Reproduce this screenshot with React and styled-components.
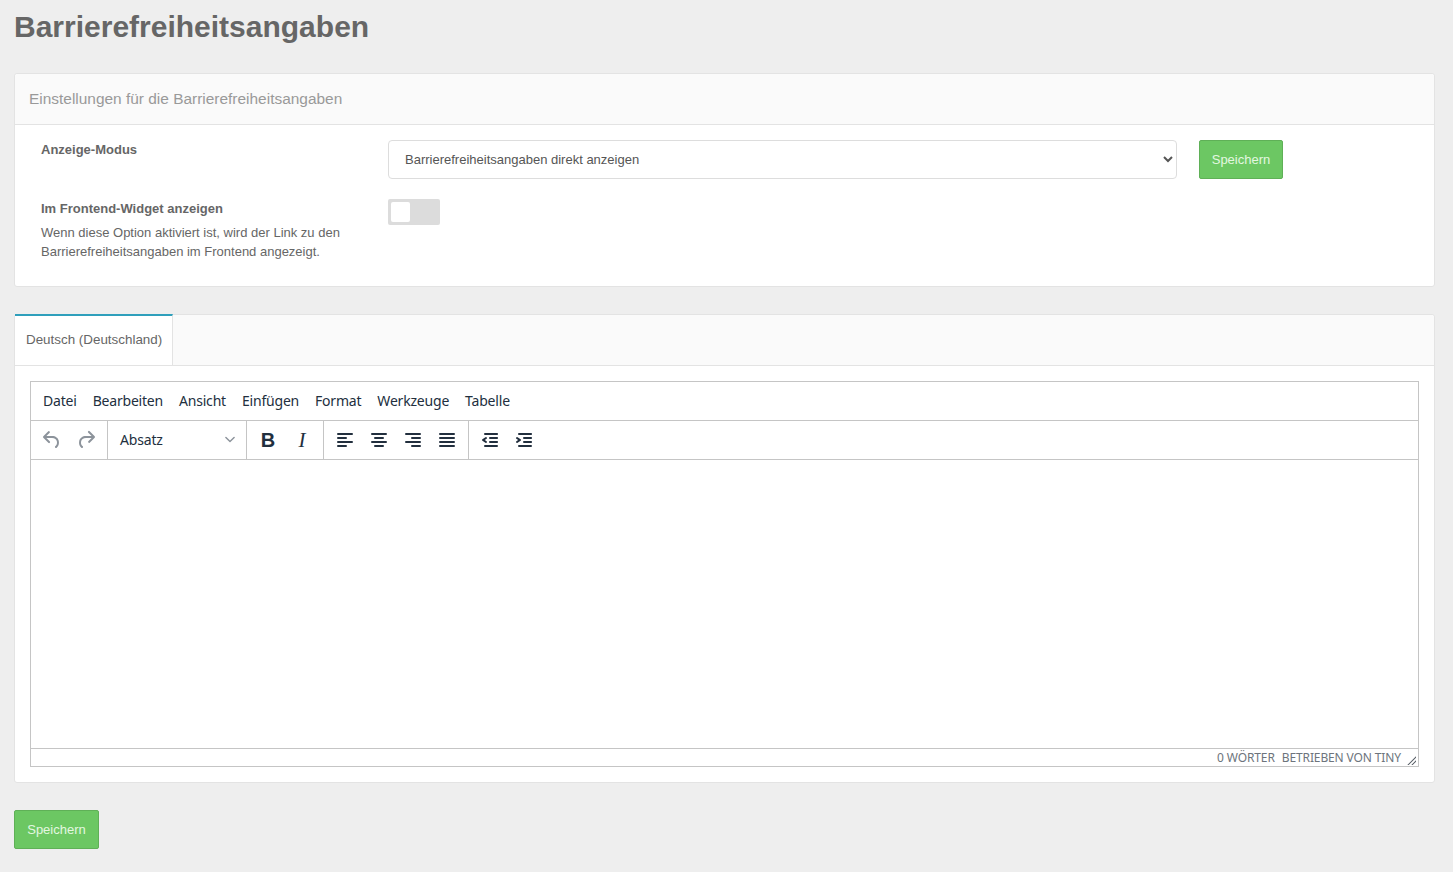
import React from 'react';
import styled, { createGlobalStyle } from 'styled-components';

const GlobalStyle = createGlobalStyle`
  html, body {
    margin: 0;
    padding: 0;
    background: #eeeeee;
    font-family: "Liberation Sans", Arial, sans-serif;
    color: #666666;
  }
  * { box-sizing: border-box; }
`

const Page = styled.div`
  padding: 0 18px 23px 14px;
`
const PageTitle = styled.h1`
  margin: 0;
  height: 73px;
  padding-top: 10px;
  font-size: 30px;
  line-height: 34px;
  font-weight: 700;
  color: #666666;
`
const Panel = styled.section`
  background: #fff;
  border: 1px solid #e3e3e3;
  border-radius: 3px;
  margin-bottom: ${(p) => p.$gap}px;
`
const PanelHeader = styled.header`
  height: 51px;
  padding: 0 14px;
  display: flex;
  align-items: center;
  background: #fafafa;
  border-bottom: 1px solid #e3e3e3;
  font-size: 15.45px;
  color: #999999;
  border-radius: 3px 3px 0 0;
`
const SettingsBody = styled.div`
  padding: 15px 26px 25px;
  display: grid;
  grid-template-columns: 347px 789px auto;
  grid-template-rows: 39px auto;
  row-gap: 20px;
  align-items: start;
`
const FieldLabel = styled.div`
  font-size: 13px;
  line-height: 20px;
  font-weight: 700;
  color: #666666;
`
const ModeLabel = styled(FieldLabel)`
  line-height: 19px;
`
const Hint = styled.p`
  margin: 4px 0 0;
  font-size: 13px;
  line-height: 19px;
  color: #666666;
  max-width: 320px;
`
const ModeSelect = styled.select`
  width: 789px;
  height: 39px;
  padding: 0 12px;
  background: #fff;
  border: 1px solid #dddddd;
  border-radius: 4px;
  font-family: inherit;
  font-size: 13px;
  color: #555555;
`
const SaveButton = styled.button`
  width: ${(p) => p.$width}px;
  height: 39px;
  padding: 0;
  background: #6cc763;
  border: 1px solid #5fb057;
  border-radius: 2px;
  font-family: inherit;
  font-size: 13px;
  color: #e3f7e0;
`
const RowSave = styled(SaveButton)`
  margin-left: 22px;
`
const Toggle = styled.div`
  width: 52px;
  height: 26px;
  padding: 3px;
  background: #dcdcdc;
  border-radius: 2px;
`
const ToggleKnob = styled.div`
  width: 19px;
  height: 20px;
  background: #fff;
  border-radius: 2px;
`
const TabBar = styled.div`
  height: 51px;
  display: flex;
  background: #fafafa;
  border-bottom: 1px solid #e3e3e3;
  border-radius: 3px 3px 0 0;
`
const Tab = styled.div`
  width: 158px;
  height: 51px;
  margin-top: -1px;
  padding: 0 0 2px 11px;
  display: flex;
  align-items: center;
  background: #fff;
  border-top: 2px solid #2f9fbb;
  border-right: 1px solid #e3e3e3;
  font-size: 13.4px;
  color: #666666;
`
const TabBody = styled.div`
  padding: 15px 15px 15px;
`
const Editor = styled.div`
  height: 386px;
  display: flex;
  flex-direction: column;
  border: 1px solid #c5c5c5;
  background: #fff;
  font-family: "Noto Sans", "Open Sans", sans-serif;
  color: #222f3e;
`
const MenuBar = styled.div`
  height: 39px;
  flex: none;
  padding: 0 4px 2px;
  display: flex;
  align-items: center;
  border-bottom: 1px solid #c5c5c5;
`
const MenuItem = styled.span`
  padding: 0 8px;
  font-size: 14px;
  letter-spacing: -0.2px;
  white-space: nowrap;
`
const ToolBar = styled.div`
  height: 39px;
  flex: none;
  display: flex;
  border-bottom: 1px solid #c5c5c5;
`
const ToolGroup = styled.div`
  display: flex;
  align-items: center;
  padding: 0 4px;
  border-right: ${(p) => (p.$last ? 'none' : '1px solid #c5c5c5')};
`
const ToolIcon = styled.span`
  width: 34px;
  height: 34px;
  display: flex;
  align-items: center;
  justify-content: center;
  color: ${(p) => (p.$disabled ? '#8c939b' : '#222f3e')};
  svg { fill: currentColor; display: block; }
`
const BoldGlyph = styled(ToolIcon)`
  font-family: "Liberation Sans", Arial, sans-serif;
  font-weight: 700;
  font-size: 20px;
`
const ItalicGlyph = styled(ToolIcon)`
  font-family: "Liberation Serif", serif;
  font-style: italic;
  font-size: 21px;
`
const FormatSelect = styled.div`
  width: 134px;
  height: 100%;
  margin-left: -4px;
  padding: 0 7px 2px 12px;
  display: flex;
  align-items: center;
  justify-content: space-between;
  font-size: 14px;
  letter-spacing: -0.18px;
  svg { color: #8c939b; fill: currentColor; display: block; margin-top: 2px; }
`
const EditArea = styled.div`
  flex: 1;
`
const StatusBar = styled.div`
  height: 18px;
  flex: none;
  padding: 0 17px 0 0;
  display: flex;
  align-items: center;
  justify-content: flex-end;
  gap: 7px;
  border-top: 1px solid #c5c5c5;
  font-size: 12px;
  letter-spacing: -0.12px;
  color: #6d747c;
  white-space: nowrap;
  position: relative;
`
const ResizeHandle = styled.svg`
  position: absolute;
  right: 1px;
  bottom: 0;
  fill: #555c64;
`

const rows = {
  left: [[4, 16], [4, 10], [4, 16], [4, 10]],
  center: [[4, 16], [7, 10], [4, 16], [7, 10]],
  right: [[4, 16], [10, 10], [4, 16], [10, 10]],
  justify: [[4, 16], [4, 16], [4, 16], [4, 16]],
}

const AlignIcon = ({ type }) => (
  <ToolIcon>
    <svg width="24" height="24" viewBox="0 0 24 24">
      {rows[type].map(([x, w], i) => (
        <rect key={i} x={x} y={5 + i * 4} width={w} height="2" rx="1" />
      ))}
    </svg>
  </ToolIcon>
)

const PathIcon = ({ d, disabled }) => (
  <ToolIcon $disabled={disabled}>
    <svg width="24" height="24" viewBox="0 0 24 24"><path d={d} /></svg>
  </ToolIcon>
)

const undoPath = 'M6.4 8H12c3.7 0 6.2 2 6.8 5.1.6 2.7-.4 5.6-2.3 6.8a1 1 0 0 1-1-1.8c1.1-.7 1.8-2.7 1.4-4.6-.5-2.1-2.1-3.5-4.9-3.5H6.4l3.3 3.3a1 1 0 1 1-1.4 1.4l-5-5a1 1 0 0 1 0-1.4l5-5a1 1 0 0 1 1.4 1.4L6.4 8Z'
const redoPath = 'M17.6 10H12c-2.8 0-4.4 1.4-4.9 3.5-.4 2 .3 3.9 1.4 4.6a1 1 0 1 1-1 1.8c-2-1.2-2.9-4.1-2.3-6.8.6-3 3.2-5.1 6.8-5.1h5.6l-3.3-3.3a1 1 0 1 1 1.4-1.4l5 5a1 1 0 0 1 0 1.4l-5 5a1 1 0 0 1-1.4-1.4l3.3-3.3Z'
const outdentPath = 'M7 5h12c.6 0 1 .4 1 1s-.4 1-1 1H7a1 1 0 1 1 0-2Zm5 4h7c.6 0 1 .4 1 1s-.4 1-1 1h-7a1 1 0 0 1 0-2Zm0 4h7c.6 0 1 .4 1 1s-.4 1-1 1h-7a1 1 0 0 1 0-2Zm-5 4h12a1 1 0 0 1 0 2H7a1 1 0 0 1 0-2Zm1.6-3.8a1 1 0 0 1-1.2 1.6l-3-2a1 1 0 0 1 0-1.6l3-2a1 1 0 0 1 1.2 1.6L6.8 12l1.8 1.2Z'
const indentPath = 'M7 5h12c.6 0 1 .4 1 1s-.4 1-1 1H7a1 1 0 1 1 0-2Zm5 4h7c.6 0 1 .4 1 1s-.4 1-1 1h-7a1 1 0 0 1 0-2Zm0 4h7c.6 0 1 .4 1 1s-.4 1-1 1h-7a1 1 0 0 1 0-2Zm-5 4h12a1 1 0 0 1 0 2H7a1 1 0 0 1 0-2Zm-2.6-3.8L6.2 12l-1.8-1.2a1 1 0 0 1 1.2-1.6l3 2a1 1 0 0 1 0 1.6l-3 2a1 1 0 1 1-1.2-1.6Z'

const menus = ['Datei', 'Bearbeiten', 'Ansicht', 'Einfügen', 'Format', 'Werkzeuge', 'Tabelle']

const App = () => {
  return (
    <Page>
      <GlobalStyle />
      <PageTitle>Barrierefreiheitsangaben</PageTitle>

      <Panel $gap={27}>
        <PanelHeader>Einstellungen für die Barrierefreiheitsangaben</PanelHeader>
        <SettingsBody>
          <ModeLabel>Anzeige-Modus</ModeLabel>
          <ModeSelect defaultValue="direct">
            <option value="direct">Barrierefreiheitsangaben direkt anzeigen</option>
          </ModeSelect>
          <RowSave $width={84}>Speichern</RowSave>
          <div>
            <FieldLabel>Im Frontend-Widget anzeigen</FieldLabel>
            <Hint>Wenn diese Option aktiviert ist, wird der Link zu den Barrierefreiheitsangaben im Frontend angezeigt.</Hint>
          </div>
          <Toggle><ToggleKnob /></Toggle>
        </SettingsBody>
      </Panel>

      <Panel $gap={27}>
        <TabBar>
          <Tab>Deutsch (Deutschland)</Tab>
        </TabBar>
        <TabBody>
          <Editor>
            <MenuBar>
              {menus.map((m) => <MenuItem key={m}>{m}</MenuItem>)}
            </MenuBar>
            <ToolBar>
              <ToolGroup>
                <PathIcon d={undoPath} disabled />
                <PathIcon d={redoPath} disabled />
              </ToolGroup>
              <ToolGroup>
                <FormatSelect>
                  Absatz
                  <svg width="10" height="10" viewBox="0 0 10 10">
                    <path d="M5 7.2a.7.7 0 0 1-.5-.2L.4 3a.7.7 0 1 1 1-1L5 5.500 8.600 2a.7.7 0 1 1 1 1L5.500 7a.7.7 0 0 1-.5.2Z" />
                  </svg>
                </FormatSelect>
              </ToolGroup>
              <ToolGroup>
                <BoldGlyph>B</BoldGlyph>
                <ItalicGlyph>I</ItalicGlyph>
              </ToolGroup>
              <ToolGroup>
                <AlignIcon type="left" />
                <AlignIcon type="center" />
                <AlignIcon type="right" />
                <AlignIcon type="justify" />
              </ToolGroup>
              <ToolGroup $last>
                <PathIcon d={outdentPath} />
                <PathIcon d={indentPath} />
              </ToolGroup>
            </ToolBar>
            <EditArea />
            <StatusBar>
              <span>0 WÖRTER</span>
              <span>BETRIEBEN VON TINY</span>
              <ResizeHandle width="10" height="10" viewBox="0 0 10 10">
                <path d="M9 1.700 1.700 9H.3L9 .3v1.400ZM9 5.700 5.700 9H4.300L9 4.300v1.400Z" />
              </ResizeHandle>
            </StatusBar>
          </Editor>
        </TabBody>
      </Panel>

      <SaveButton $width={85}>Speichern</SaveButton>
    </Page>
  )
}

export default App;
